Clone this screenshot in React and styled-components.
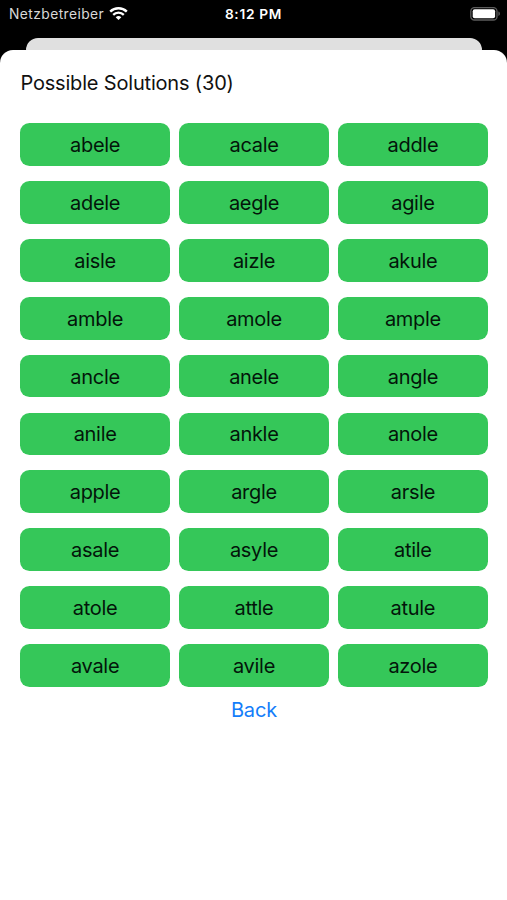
import React from 'react';
import styled, { createGlobalStyle } from 'styled-components';

const GlobalStyle = createGlobalStyle`
  * {
    box-sizing: border-box;
  }
  body {
    margin: 0;
    background-color: #000;
    font-family: Inter, "Liberation Sans", sans-serif;
  }
`;

const Screen = styled.div`
  display: flex;
  flex-direction: column;
  height: 900px;
  background-color: #000;
  overflow: hidden;
`;

const StatusBar = styled.header`
  display: grid;
  grid-template-columns: 1fr auto 1fr;
  align-items: center;
  height: 27px;
  padding: 0 9px;
  color: #fff;
`;

const Carrier = styled.div`
  display: flex;
  align-items: center;
  gap: 5px;
  font-size: 13.8px;
  letter-spacing: 0.43px;
  color: #d8d8d8;
`;

const Time = styled.div`
  font-size: 13.7px;
  font-weight: 600;
  letter-spacing: 0.7px;
`;

const Battery = styled.svg`
  justify-self: end;
  margin-right: -3px;
`;

const CardBehind = styled.div`
  height: 12.5px;
  margin: 10.5px 25px 0 25.5px;
  border-radius: 12px 12px 0 0;
  background-color: #e0e0e0;
`;

const Sheet = styled.main`
  flex: 1;
  display: flex;
  flex-direction: column;
  padding: 20px 19.4px 0 20.4px;
  border-radius: 13px 13px 0 0;
  background-color: #fff;
`;

const Title = styled.h1`
  margin: 0 0 27.4px;
  font-size: 20px;
  line-height: 26px;
  font-weight: 400;
  letter-spacing: -0.18px;
  color: #111;
`;

const Solutions = styled.div`
  display: grid;
  grid-template-columns: repeat(3, 1fr);
  grid-auto-rows: 42.7px;
  gap: 15.15px 9.5px;
`;

const Word = styled.div`
  display: flex;
  align-items: center;
  justify-content: center;
  padding-top: 1px;
  border-radius: 9.5px;
  background-color: #35c759;
  color: #03150a;
  font-size: 20px;
  letter-spacing: -0.3px;
`;

const BackButton = styled.button`
  align-self: center;
  margin-top: 10.6px;
  padding: 0;
  border: none;
  background-color: transparent;
  color: #137dfa;
  font-family: inherit;
  font-size: 20px;
  line-height: 26px;
  letter-spacing: -0.15px;
  cursor: pointer;
`;

const words = [
  'abele', 'acale', 'addle',
  'adele', 'aegle', 'agile',
  'aisle', 'aizle', 'akule',
  'amble', 'amole', 'ample',
  'ancle', 'anele', 'angle',
  'anile', 'ankle', 'anole',
  'apple', 'argle', 'arsle',
  'asale', 'asyle', 'atile',
  'atole', 'attle', 'atule',
  'avale', 'avile', 'azole',
];

const WifiIcon = () => (
  <svg width="19" height="14" viewBox="0 0 19 14" fill="none" stroke="#fff">
    <path d="M1.2 4.7a11.8 11.8 0 0 1 16.6 0" strokeWidth="2.4" />
    <path d="M4.2 7.9a7.5 7.5 0 0 1 10.6 0" strokeWidth="2.3" />
    <path d="M9.5 13.1 6.7 10.3a4 4 0 0 1 5.6 0Z" fill="#fff" stroke="none" />
  </svg>
);

const BatteryIcon = () => (
  <Battery width="31" height="14" viewBox="0 0 31 14">
    <rect x="0.8" y="0.6" width="26.2" height="12.4" rx="3.6" fill="none" stroke="#5c5c5c" strokeWidth="1.3" />
    <rect x="2.7" y="2.3" width="22.4" height="9" rx="2" fill="#fff" />
    <path d="M28.4 4.6c2 .6 2 3.8 0 4.4Z" fill="#5c5c5c" />
  </Battery>
);

const App = () => {
  return (
    <>
      <GlobalStyle />
      <Screen>
        <StatusBar>
          <Carrier>
            Netzbetreiber
            <WifiIcon />
          </Carrier>
          <Time>8:12 PM</Time>
          <BatteryIcon />
        </StatusBar>
        <CardBehind />
        <Sheet>
          <Title>Possible Solutions ({words.length})</Title>
          <Solutions>
            {words.map((word) => (
              <Word key={word}>{word}</Word>
            ))}
          </Solutions>
          <BackButton>Back</BackButton>
        </Sheet>
      </Screen>
    </>
  );
};

export default App;
